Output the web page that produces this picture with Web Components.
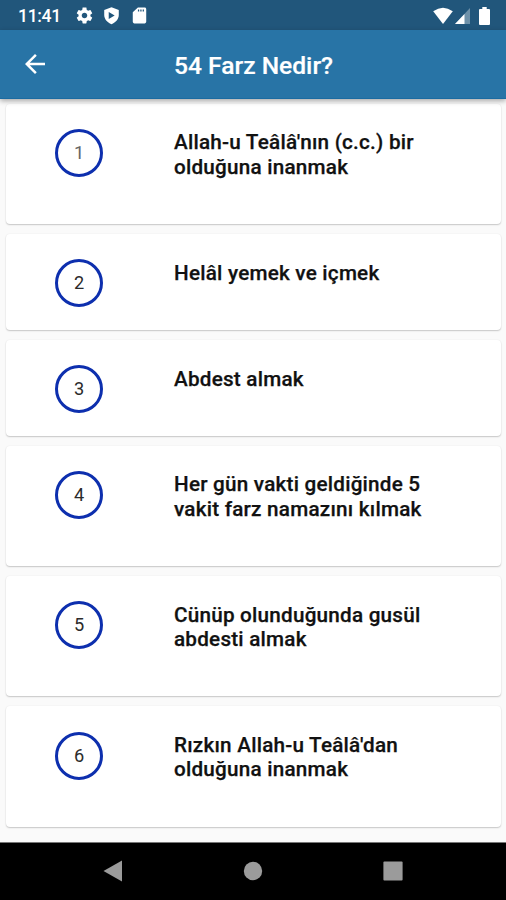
<!DOCTYPE html>
<html lang="tr">
<head>
<meta charset="utf-8">
<title>54 Farz Nedir?</title>
<style>
  html, body { margin: 0; height: 100%; overflow: hidden; }
  body { font-family: Roboto, sans-serif; background: #fafafa; }
</style>
</head>
<body>
<farz-screen></farz-screen>
<script>
const define = (name, html) => {
  const template = document.createElement('template');
  template.innerHTML = html;
  customElements.define(name, class extends HTMLElement {
    constructor() {
      super();
      this.attachShadow({ mode: 'open' }).append(template.content.cloneNode(true));
    }
  });
};

define('status-bar', `
<style>
  :host { display: flex; height: 30px; flex: none; box-sizing: border-box; align-items: center; background: #21567b; color: #fff; padding: 1px 16px 0 18px; }
  time { font: 500 17.6px/20px Roboto, sans-serif; letter-spacing: -.35px; width: 56.500px; white-space: nowrap; }
  svg { display: block; fill: #fff; }
  .left, .right { display: flex; align-items: center; }
  .left { gap: 8.5px; flex: 1; }
  .right { gap: 2px; }
</style>
<time>11:41</time>
<div class="left">
  <svg width="19" height="19" viewBox="0 0 24 24"><path d="M19.43 12.98c.04-.32.07-.64.07-.98s-.03-.66-.07-.98l2.11-1.65c.19-.15.24-.42.12-.64l-2-3.46c-.12-.22-.39-.3-.61-.22l-2.49 1c-.52-.4-1.08-.73-1.69-.98l-.38-2.65C14.46 2.18 14.25 2 14 2h-4c-.25 0-.46.18-.49.42l-.38 2.65c-.61.25-1.17.59-1.69.98l-2.49-1c-.23-.09-.49 0-.61.22l-2 3.46c-.13.22-.07.49.12.64l2.11 1.65c-.04.32-.07.65-.07.98s.03.66.07.98l-2.11 1.65c-.19.15-.24.42-.12.64l2 3.46c.12.22.39.3.61.22l2.49-1c.52.4 1.08.73 1.69.98l.38 2.65c.03.24.24.42.49.42h4c.25 0 .46-.18.49-.42l.38-2.65c.61-.25 1.17-.59 1.69-.98l2.49 1c.23.09.49 0 .61-.22l2-3.46c.12-.22.07-.49-.12-.64l-2.11-1.65zM12 15.5c-1.93 0-3.5-1.57-3.5-3.5s1.57-3.5 3.5-3.5 3.5 1.57 3.5 3.5-1.57 3.5-3.5 3.5z"/></svg>
  <svg width="19" height="19" viewBox="0 0 24 24"><path fill-rule="evenodd" d="M12 1.500 2.800 5v6.500c0 5 3.700 9.500 9.200 11.500 5.500-2 9.200-6.500 9.200-11.500V5zM8.500 7.500l7.500 4.500-7.500 4.500z"/></svg>
  <svg width="19" height="19" viewBox="0 0 24 24"><path fill-rule="evenodd" d="M18.500 2H10L3.500 8v12c0 1.100.9 2 2 2h13c1.100 0 2-.9 2-2V4c0-1.100-.9-2-2-2zM10 4.500h1.600V7H10zm3 0h1.600V7H13zm3 0h1.600V7H16z"/></svg>
</div>
<div class="right">
  <svg width="20" height="18" viewBox="0 0 20 18"><path d="M0.200 4.200Q10-2.800 19.800 4.200L10 17z"/></svg>
  <svg width="16" height="16" viewBox="0 0 16 16"><path opacity=".35" d="M15 0v16H0z"/><path d="M9.500 6v10H0z"/></svg>
  <svg style="margin-left:6px" width="11" height="18" viewBox="0 0 11 18"><path d="M3.300 0h4.400v2H10q1 0 1 1v14q0 1-1 1H1q-1 0-1-1V3q0-1 1-1h2.300z"/></svg>
</div>`);

define('app-bar', `
<style>
  :host { display: grid; grid-template-columns: 174px 1fr; align-items: center; flex: none; height: 69px; background: #2874a6; color: #fff; box-shadow: 0 2px 5px rgba(0,0,0,.33); position: relative; box-sizing: border-box; border-bottom: 1px solid #1b6ba1; }
  svg { display: block; margin-left: 20px; fill: #fff; }
  h1 { margin: 3px 0 0; font: 500 24.600px/30px Roboto, sans-serif; -webkit-text-stroke: .2px #fff; white-space: nowrap; }
</style>
<svg width="30" height="30" viewBox="0 0 24 24"><path d="M20 11H7.830l5.590-5.590L12 4l-8 8 8 8 1.410-1.410L7.830 13H20v-2z"/></svg>
<h1><slot></slot></h1>`);

define('farz-card', `
<style>
  :host { display: grid; grid-template-columns: 168px 1fr; box-sizing: border-box; background: #fff; border-radius: 4px; padding: 25.500px 60px 46.300px 0; box-shadow: 0 1px 1.500px rgba(0,0,0,.2), 0 0 2px rgba(0,0,0,.06); }
  .badge { box-sizing: border-box; width: 48px; height: 48px; margin: 0 0 -24px 49px; border: 3px solid #0d2fae; border-radius: 50%; display: flex; align-items: center; justify-content: center; color: #2b2b2b; font: 400 18.200px/22px Roboto, sans-serif; }
  .text { margin: 1.300px 0 -1.300px; font: 500 20.700px/24.350px Roboto, sans-serif; letter-spacing: .22px; -webkit-text-stroke: .25px #111; color: #111; white-space: pre-line; }
  :host([faded]) .badge { color: #666; }
</style>
<div class="badge"><slot name="number"></slot></div>
<div class="text"><slot></slot></div>`);

define('nav-bar', `
<style>
  :host { display: grid; grid-template-columns: 1fr 1fr 1fr; padding: 0 42.500px 2px 43px; height: 58px; flex: none; background: #000; border-top: 1px solid #777; box-sizing: border-box; align-items: center; justify-items: center; }
  svg { display: block; fill: #9b9b9b; }
</style>
<svg width="20" height="22" viewBox="0 0 20 22"><path d="M19 .5v21L.5 11z"/></svg>
<svg width="20" height="20" viewBox="0 0 20 20"><circle cx="10" cy="10" r="9.200"/></svg>
<svg width="20" height="20" viewBox="0 0 20 20"><rect x=".4" y=".4" width="19.200" height="19.200" rx="1"/></svg>`);

define('farz-screen', `
<style>
  :host { display: flex; flex-direction: column; width: 506px; height: 900px; background: #fafafa; overflow: hidden; }
  app-bar { z-index: 1; }
  main { flex: 1; min-height: 0; display: flex; flex-direction: column; gap: 9.800px; padding: 4.500px 5px 0 6px; overflow: hidden; }
</style>
<status-bar></status-bar>
<app-bar>54 Farz Nedir?</app-bar>
<main>
  <farz-card faded><span slot="number">1</span>Allah-u Teâlâ'nın (c.c.) bir
olduğuna inanmak</farz-card>
  <farz-card><span slot="number">2</span>Helâl yemek ve içmek</farz-card>
  <farz-card><span slot="number">3</span>Abdest almak</farz-card>
  <farz-card><span slot="number">4</span>Her gün vakti geldiğinde 5
vakit farz namazını kılmak</farz-card>
  <farz-card><span slot="number">5</span>Cünüp olunduğunda gusül
abdesti almak</farz-card>
  <farz-card><span slot="number">6</span>Rızkın Allah-u Teâlâ'dan
olduğuna inanmak</farz-card>
</main>
<nav-bar></nav-bar>`);
</script>
</body>
</html>
